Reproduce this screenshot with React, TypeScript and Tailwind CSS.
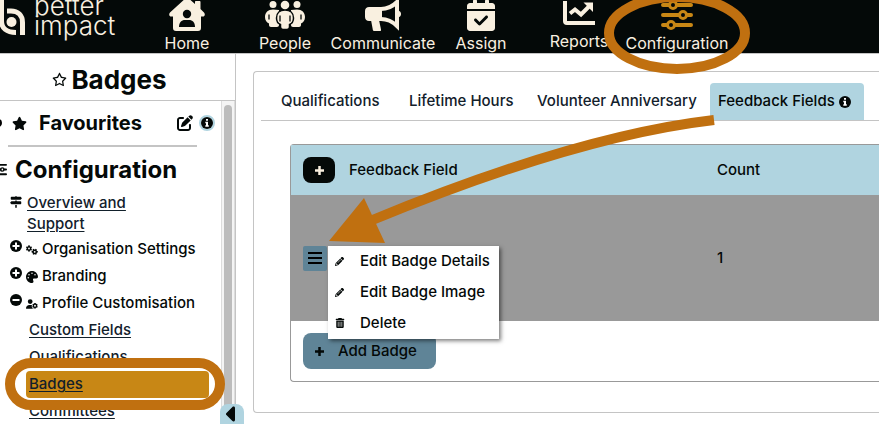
import React, { useState } from "react";
import {
  FaCalendarCheck,
  FaCaretLeft,
  FaGears,
  FaPalette,
  FaPencil,
  FaPenToSquare,
  FaRegStar,
  FaSignsPost,
  FaStar,
  FaTrashCan,
  FaUserGear,
} from "react-icons/fa6";

const LogoMark = () => (
  <svg width="26" height="36" viewBox="0 0 26 36" fill="none" className="shrink-0" aria-hidden="true">
    <path d="M1.500 0v21c0 7 5 11.500 14.500 11.500" stroke="#f9f0e0" strokeWidth="5" />
    <path d="M7 11h4c7 0 11.500 4.500 11.500 11.500V35" stroke="#f9f0e0" strokeWidth="5" />
    <circle cx="11.500" cy="22" r="5" fill="#f9f0e0" />
  </svg>
);

const HomeIcon = () => (
  <svg width="36" height="31" viewBox="0 0 36 31" fill="currentColor" aria-hidden="true">
    <path d="M18-3L1 12.500c-1.500 1.500-.8 4 1.200 4H4V28c0 2 1 3 3 3h22c2 0 3-1 3-3V16.500h1.800c2 0 2.700-2.500 1.200-4L31.500 9V2c0-.7-.4-1-1-1H27c-.6 0-1 .3-1 1v2z" />
    <circle cx="18" cy="14" r="4.200" fill="#040908" />
    <path d="M10 27c0-4.500 2.500-7 6-7h4c3.500 0 6 2.500 6 7z" fill="#040908" />
  </svg>
);

const PeopleIcon = () => (
  <svg width="40" height="31" viewBox="0 0 40 31" fill="currentColor" aria-hidden="true">
    <circle cx="8" cy="4.500" r="3.500" />
    <circle cx="32" cy="4.500" r="3.500" />
    <path d="M8 9.500c-5 0-8 3-8 7.500 0 3 1.500 5.500 4 6.500V25c0 1 .8 2 2 2h6c1.200 0 2-1 2-2V10z" />
    <path d="M32 9.500c5 0 8 3 8 7.500 0 3-1.500 5.500-4 6.500V25c0 1-.8 2-2 2h-6c-1.200 0-2-1-2-2V10z" />
    <path
      d="M20 10c-5 0-8.500 3-8.500 8 0 3 1.500 5.500 4 6.500v2.500c0 1.500 1 2.500 2.500 2.500h4c1.500 0 2.500-1 2.500-2.500v-2.500c2.500-1 4-3.500 4-6.500 0-5-3.500-8-8.500-8z"
      stroke="#040908"
      strokeWidth="1.500"
    />
    <circle cx="20" cy="5" r="4.300" />
    <path d="M4 14.500v5M36 14.500v5M15 15.500v6M25 15.500v6" stroke="#040908" strokeWidth="1.300" />
  </svg>
);

const MegaphoneIcon = () => (
  <svg width="36" height="31" viewBox="0 0 36 31" aria-hidden="true">
    <path d="M4 7h13v14H4c-2.200 0-4-1.500-4-4v-6c0-2.500 1.800-4 4-4z" fill="currentColor" />
    <path d="M6 20h8l2 9.500c.2 1-.3 1.500-1 1.500H9.500c-1 0-1.500-.4-1.700-1.300z" fill="currentColor" />
    <path d="M16 9c6 0 11-2 16-7v24c-5-5-10-7-16-7" fill="none" stroke="currentColor" strokeWidth="4" />
    <path d="M33 10.500c2 .5 3 1.800 3 3.500s-1 3-3 3.500z" fill="currentColor" />
  </svg>
);

const ReportsIcon = () => (
  <svg width="32" height="29" viewBox="0 0 32 29" fill="none" stroke="currentColor" aria-hidden="true">
    <path d="M2 1v20c0 1.500.8 2 2 2h28" strokeWidth="4" />
    <path d="M7 13.500l5-4 6 5 9-9" strokeWidth="4" />
    <path d="M20.500 2.500H30V12z" fill="currentColor" stroke="none" />
  </svg>
);

const SlidersIcon = ({ size }: { size: number }) => (
  <svg width={size} height={size} viewBox="0 0 32 32" fill="none" stroke="currentColor" strokeWidth="4" aria-hidden="true">
    <path d="M2 6h6M16 6h14M2 16h16M26 16h4M2 26h4M14 26h16" strokeLinecap="round" />
    <circle cx="12" cy="6" r="3.500" strokeWidth="3" />
    <circle cx="22" cy="16" r="3.500" strokeWidth="3" />
    <circle cx="10" cy="26" r="3.500" strokeWidth="3" />
  </svg>
);

const InfoIcon = () => (
  <svg width="12" height="12" viewBox="0 0 12 12" className="shrink-0" aria-hidden="true">
    <circle cx="6" cy="6" r="6" fill="#040908" />
    <path d="M5 2h2v1.800H5zM4.300 4.800H7v3.500h.8v1.400H4.300V8.300H5V6.200h-.7z" fill="#fff" />
  </svg>
);

const ToggleIcon = ({ open }: { open: boolean }) => (
  <svg width="12" height="12" viewBox="0 0 12 12" aria-hidden="true">
    <circle cx="6" cy="6" r="6" fill="#040908" />
    <path d={open ? "M2.500 6h7" : "M2.500 6h7M6 2.500v7"} stroke="#fff" strokeWidth="2" />
  </svg>
);

const PlusIcon = () => (
  <svg width="9" height="9" viewBox="0 0 9 9" className="shrink-0" aria-hidden="true">
    <path d="M0 4.500h9M4.500 0v9" stroke="currentColor" strokeWidth="2.500" />
  </svg>
);

const navItems = [
  { label: "Home", icon: <HomeIcon /> },
  { label: "People", icon: <PeopleIcon /> },
  { label: "Communicate", icon: <MegaphoneIcon /> },
  { label: "Assign", icon: <FaCalendarCheck size={32} /> },
  { label: "Reports", icon: <ReportsIcon /> },
  { label: "Configuration", icon: <SlidersIcon size={32} />, active: true },
];

const sections = [
  { label: "Organisation Settings", icon: <FaGears size={12} />, open: false },
  { label: "Branding", icon: <FaPalette size={12} />, open: false },
  { label: "Profile Customisation", icon: <FaUserGear size={12} />, open: true },
];

const customisationLinks = ["Custom Fields", "Qualifications", "Badges", "Committees"];

const tabs = [
  { label: "Qualifications", width: "w-32" },
  { label: "Lifetime Hours", width: "w-32" },
  { label: "Volunteer Anniversary", width: "w-[181px]" },
];

const menuItems = [
  { label: "Edit Badge Details", icon: <FaPencil size={9} /> },
  { label: "Edit Badge Image", icon: <FaPencil size={9} /> },
  { label: "Delete", icon: <FaTrashCan size={10} /> },
];

const Header = () => (
  <header className="flex h-[54px] shrink-0 overflow-hidden border-b border-[#c4c4c4] bg-[#040908] text-[#f9f0e0]">
    <a href="#" className="flex w-[138px] shrink-0 gap-2">
      <LogoMark />
      <span className="-mt-1 text-[26px] leading-5 font-light">
        better
        <br />
        impact
      </span>
    </a>
    <nav className="flex">
      {navItems.map((item) => (
        <a key={item.label} href="#" className="flex w-[98px] shrink-0 flex-col items-center">
          <span className={`flex h-[31px] items-end ${item.active ? "text-[#c88715]" : ""}`}>{item.icon}</span>
          <span className="text-base leading-6">{item.label}</span>
        </a>
      ))}
    </nav>
  </header>
);

const Sidebar = () => (
  <aside className="relative flex w-[236px] shrink-0 flex-col border-r border-[#c4c4c4]">
    <h1 className="flex h-[47px] shrink-0 items-center justify-center gap-1 border-b border-[#c4c4c4] pt-1 pr-4 text-[26px] font-bold">
      <FaRegStar size={15} />
      Badges
    </h1>
    <div className="flex min-h-0 flex-1">
      <div className="min-w-0 flex-1 overflow-hidden">
        <div className="flex h-11 items-center pr-1.5">
          <span className="-ml-1.5 h-2 w-2 rounded-full border-2 border-black" />
          <FaStar size={15} className="ml-2.5" />
          <h2 className="ml-3 flex-1 text-xl font-bold">Favourites</h2>
          <button type="button" aria-label="Edit favourites">
            <FaPenToSquare size={16} />
          </button>
          <button type="button" aria-label="About favourites" className="ml-1.5 rounded-full border-2 border-[#b0d4e0]">
            <InfoIcon />
          </button>
        </div>
        <hr className="mr-6 ml-2 border-t-2 border-[#c4c4c4]" />
        <h2 className="flex h-[45px] items-center gap-2 text-2xl font-bold">
          <span className="-ml-2">
            <SlidersIcon size={15} />
          </span>
          Configuration
        </h2>
        <div className="mb-0.5 flex gap-[5px] pl-2.5">
          <FaSignsPost size={12} className="mt-1 shrink-0" />
          <a href="#" className="w-32 text-[15px] leading-[21px] font-medium text-[#12202b] underline underline-offset-2">
            Overview and Support
          </a>
        </div>
        {sections.map((section) => (
          <div key={section.label} className="flex h-[27px] items-center gap-1 pl-2.5 text-[15px] font-medium whitespace-nowrap">
            <button type="button" aria-label={section.label} className="mb-2">
              <ToggleIcon open={section.open} />
            </button>
            {section.icon}
            {section.label}
          </div>
        ))}
        <ul className="pr-3 pl-[26px]">
          {customisationLinks.map((link) => (
            <li
              key={link}
              className={`flex h-[27px] items-center rounded pl-[3px] ${link === "Badges" ? "bg-[#c88715]" : ""}`}
            >
              <a href="#" className="text-[15px] font-medium text-[#12202b] underline underline-offset-2">
                {link}
              </a>
            </li>
          ))}
        </ul>
      </div>
      <div className="w-3.5 border-x border-[#dcdcdc] bg-[#f4f4f4] px-0.5 pt-1">
        <div className="h-full rounded-t-full bg-[#bcbcbc]" />
      </div>
    </div>
    <button
      type="button"
      aria-label="Collapse sidebar"
      className="absolute -right-[9px] bottom-0 flex h-5 w-6 items-center justify-center rounded-t-lg bg-[#b0d4e0]"
    >
      <FaCaretLeft size={24} />
    </button>
  </aside>
);

const RowMenu = () => (
  <ul className="absolute top-0 left-full z-10 ml-px w-[171px] bg-white shadow-[2px_2px_4px_rgba(0,0,0,0.5)]">
    {menuItems.map((item) => (
      <li key={item.label}>
        <button type="button" className="flex h-[31px] w-full items-center pl-[7px] text-[15px] font-medium whitespace-nowrap">
          <span className="w-[25px]">{item.icon}</span>
          {item.label}
        </button>
      </li>
    ))}
  </ul>
);

// Callouts drawn over the page: two rings and the arrow to the row menu
const Annotations = () => (
  <svg className="pointer-events-none absolute top-0 left-0 z-20" width="879" height="424" fill="none" stroke="#c07010" aria-hidden="true">
    <ellipse cx="677" cy="33" rx="68" ry="36" strokeWidth="10" />
    <rect x="10" y="363" width="210" height="42" rx="21" strokeWidth="10" />
    <path d="M714 120Q576 136 370 221" strokeWidth="10" />
    <path d="M329 241l35-43 21 45z" fill="#c07010" stroke="none" />
  </svg>
);

const App = () => {
  const [menuOpen, setMenuOpen] = useState(true);

  return (
    <div className="relative flex h-screen flex-col overflow-hidden bg-white font-['Inter',sans-serif] text-[#040908]">
      <Header />
      <div className="flex min-h-0 flex-1">
        <Sidebar />
        <main className="min-w-0 flex-1 pt-[17px] pl-[17px]">
          <section className="rounded-l border border-r-0 border-[#c4c4c4] pt-[11px] pb-[30px] pl-[7px]">
            <nav className="flex h-[38px] border-b border-[#c4c4c4] pl-3 text-[15px] font-medium whitespace-nowrap text-[#12202b]">
              {tabs.map((tab) => (
                <a key={tab.label} href="#" className={`flex shrink-0 items-center px-2 ${tab.width}`}>
                  {tab.label}
                </a>
              ))}
              <a href="#" className="flex w-[154px] shrink-0 items-center gap-1 rounded-t bg-[#b0d4e0] px-2 text-[#040908]">
                Feedback Fields
                <InfoIcon />
              </a>
            </nav>
            <div className="mt-[23px] ml-[29px] rounded-l border border-r-0 border-[#999999]">
              <table className="w-full table-fixed text-left text-[15px]">
                <thead>
                  <tr className="h-[50px] bg-[#b0d4e0]">
                    <th className="w-[58px] pl-3">
                      <button
                        type="button"
                        aria-label="Add feedback field"
                        className="flex h-[26px] w-8 items-center justify-center rounded-lg bg-[#040908] text-[#f9f0e0]"
                      >
                        <PlusIcon />
                      </button>
                    </th>
                    <th className="w-[368px] font-medium">Feedback Field</th>
                    <th className="font-medium">Count</th>
                  </tr>
                </thead>
                <tbody>
                  <tr className="h-[126px] bg-[#999999]">
                    <td className="pl-3">
                      <div className="relative w-6">
                        <button
                          type="button"
                          aria-label="Row menu"
                          onClick={() => setMenuOpen(!menuOpen)}
                          className="flex h-[25px] w-6 flex-col items-center justify-center gap-[3px] rounded-xs bg-[#5f8497]"
                        >
                          <span className="h-0.5 w-3.5 bg-black" />
                          <span className="h-0.5 w-3.5 bg-black" />
                          <span className="h-0.5 w-3.5 bg-black" />
                        </button>
                        {menuOpen && <RowMenu />}
                      </div>
                    </td>
                    <td />
                    <td className="font-medium">1</td>
                  </tr>
                </tbody>
              </table>
              <div className="p-3">
                <button
                  type="button"
                  className="flex h-9 w-[133px] items-center gap-3.5 rounded-lg bg-[#5f8497] pl-3 text-[15px] font-medium whitespace-nowrap"
                >
                  <PlusIcon />
                  Add Badge
                </button>
              </div>
            </div>
          </section>
        </main>
      </div>
      <Annotations />
    </div>
  );
};

export default App;
